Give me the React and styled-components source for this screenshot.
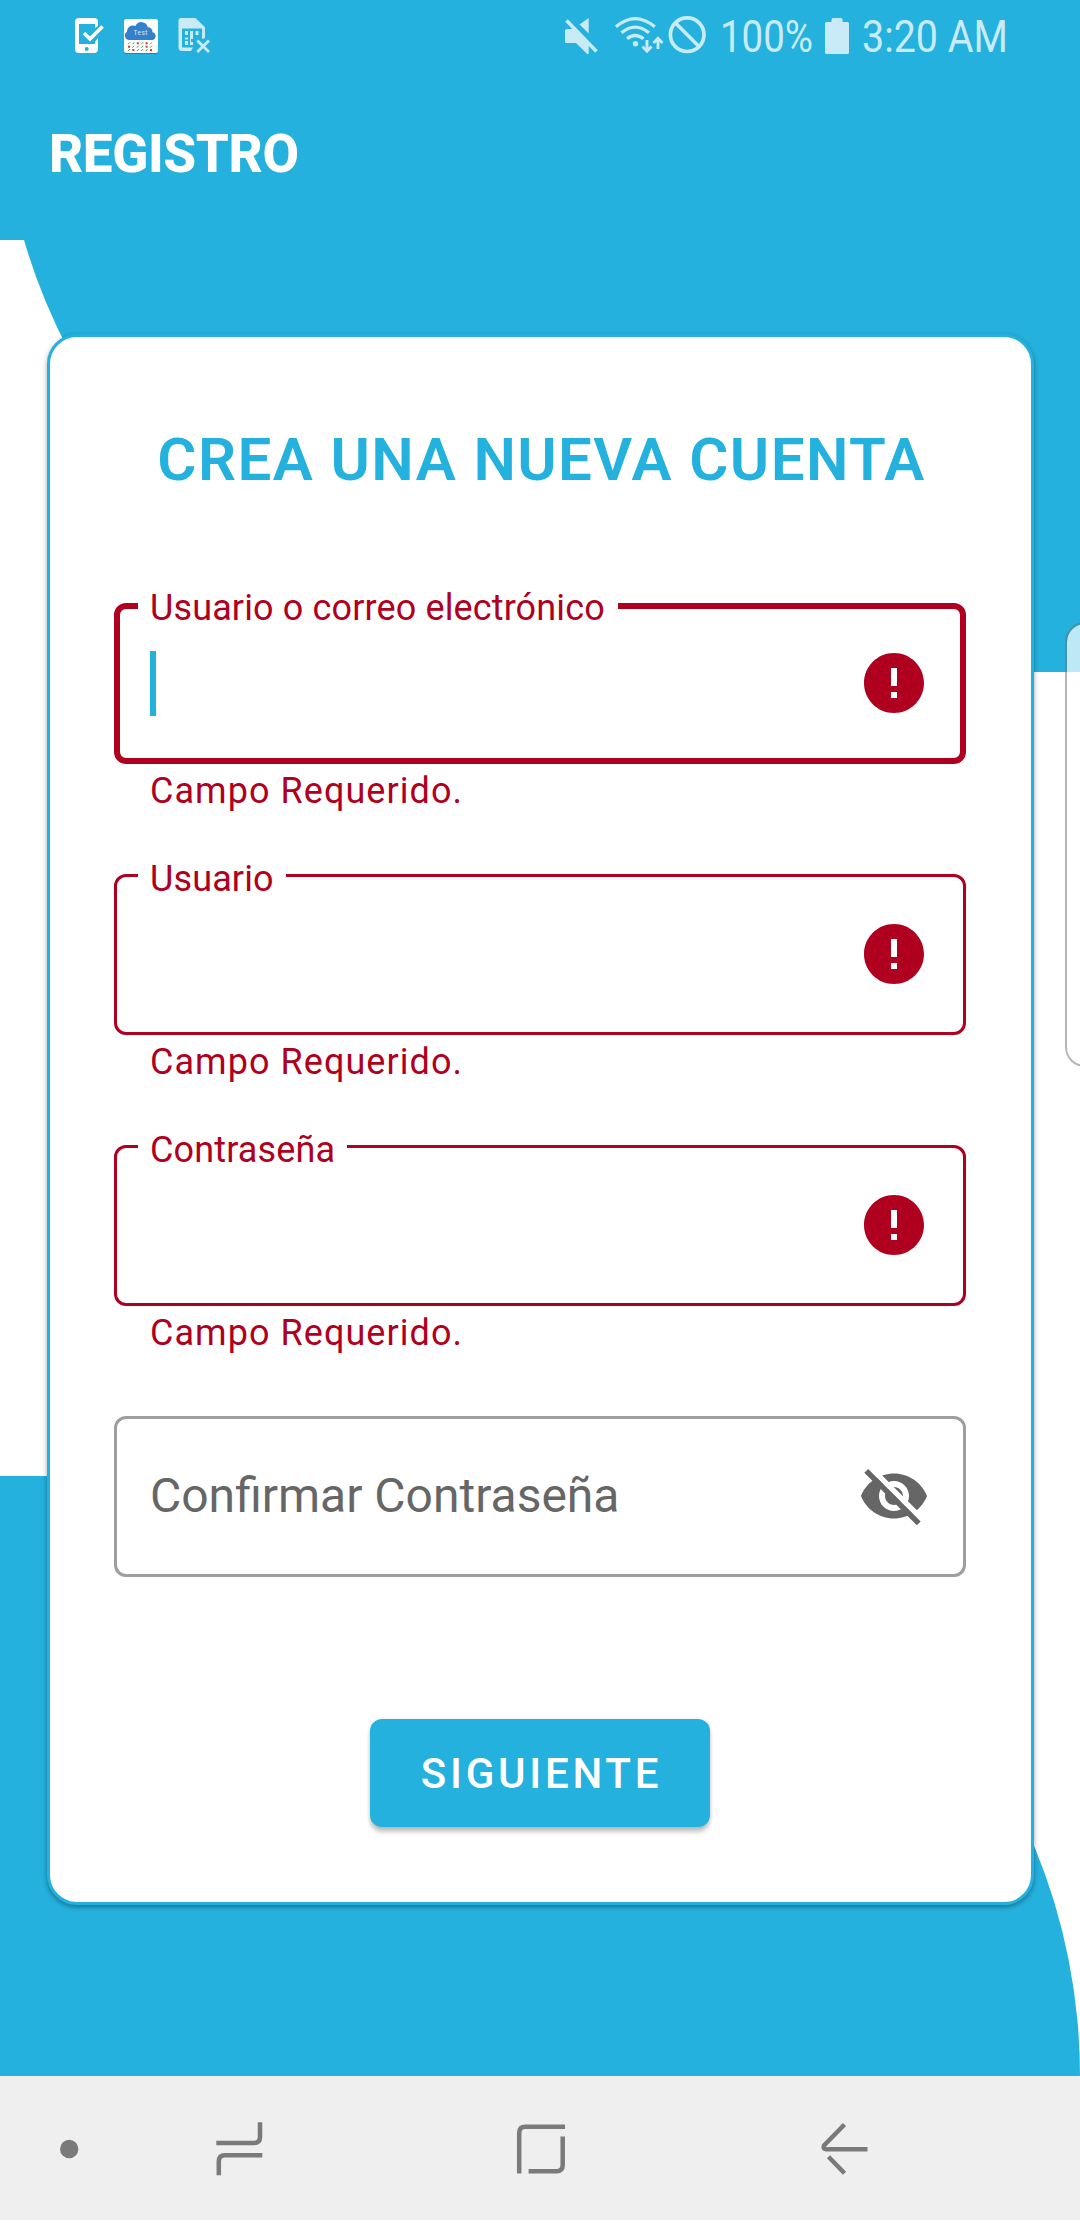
import React from "react";
import styled, { createGlobalStyle } from "styled-components";

const BLUE = "#24b1dd";
const ERROR = "#b00020";

const Global = createGlobalStyle`
  * { box-sizing: border-box; }
  body { margin: 0; background: #fff; font-family: Roboto, "Liberation Sans", sans-serif; }
`;

const Screen = styled.div`
  width: 1080px;
  height: 2220px;
  display: grid;
  grid-template-rows: 72px 168px 1836px 144px;
  position: relative;
  overflow: hidden;
`;

const StatusBar = styled.header`
  background: ${BLUE};
  color: #c8ebf7;
  display: flex;
  justify-content: space-between;
  padding: 0 73px 0 72px;
`;

const StatusGroup = styled.div`
  display: flex;
  height: 72px;
`;

const StatusIcon = styled.svg`
  display: block;
  flex: none;
  width: ${(p) => p.$w}px;
  height: 72px;
`;

const StatusText = styled.div`
  width: ${(p) => p.$w}px;
  font-size: 45px;
  line-height: 74px;
  white-space: nowrap;
  transform-origin: 0 0;
  transform: scaleX(${(p) => p.$scale});
`;

const AppBar = styled.div`
  background: ${BLUE};
  display: flex;
  align-items: center;
  padding: 0 0 5px 49px;
`;

const AppTitle = styled.h1`
  margin: 0;
  color: #fff;
  font-size: 53px;
  line-height: 60px;
  font-weight: 800;
  letter-spacing: -0.4px;
`;

const Body = styled.main`
  position: relative;
  overflow: hidden;
  background: #fff;
  padding: 94px 46px 0 47px;
  &::before,
  &::after {
    content: "";
    position: absolute;
    left: 0;
    width: 1080px;
    height: 600px;
    background: ${BLUE};
  }
  &::before {
    top: -168px;
    border-bottom-left-radius: 600px;
  }
  &::after {
    bottom: 0;
    border-top-right-radius: 600px;
  }
`;

const Card = styled.section`
  position: relative;
  z-index: 1;
  height: 1571px;
  background: #fff;
  border: 3px solid ${BLUE};
  border-radius: 30px;
  box-shadow: 0 2px 5px rgba(0, 0, 0, 0.36);
  padding: 82px 65px 0 64px;
  display: flex;
  flex-direction: column;
  align-items: center;
`;

const Heading = styled.h2`
  margin: 0 0 102px;
  padding-left: 3px;
  height: 82px;
  line-height: 82px;
  color: ${BLUE};
  font-size: 60px;
  font-weight: 600;
  letter-spacing: 1.4px;
  white-space: nowrap;
`;

const Field = styled.div`
  width: 852px;
  height: 271px;
`;

const Box = styled.div`
  position: relative;
  height: 161px;
  border: ${(p) => (p.$focused ? 6 : 3)}px solid ${(p) => (p.$error ? ERROR : "#9e9e9e")};
  border-radius: 12px;
  padding: 0 ${(p) => (p.$focused ? 30 : 33)}px;
  display: flex;
  align-items: center;
  justify-content: space-between;
`;

const Label = styled.span`
  position: absolute;
  top: ${(p) => (p.$focused ? -22 : -19)}px;
  left: ${(p) => (p.$focused ? 18 : 21)}px;
  width: ${(p) => p.$w}px;
  padding-left: 12px;
  background: #fff;
  color: ${ERROR};
  font-size: 36px;
  line-height: 42px;
  letter-spacing: 0.13px;
  white-space: nowrap;
`;

const Caret = styled.span`
  width: 6px;
  height: 65px;
  background: ${BLUE};
`;

const Placeholder = styled.span`
  margin-bottom: 2px;
  color: #666;
  font-size: 48px;
  line-height: 60px;
`;

const FieldIcon = styled.svg`
  display: block;
  width: 72px;
  height: 72px;
  margin: 0 0 1px auto;
  color: ${(p) => (p.$error ? ERROR : "#666")};
`;

const Helper = styled.div`
  padding: 6px 0 0 36px;
  color: ${ERROR};
  font-size: 36px;
  line-height: 42px;
  letter-spacing: 1.05px;
`;

const Next = styled.button`
  width: 340px;
  height: 108px;
  margin-top: 32px;
  padding: 2px 0 0 3px;
  border: 0;
  border-radius: 12px;
  background: ${BLUE};
  color: #fff;
  font: 500 42px/1 Roboto, "Liberation Sans", sans-serif;
  letter-spacing: 3.75px;
  box-shadow: 0 6px 5px -1px rgba(0, 0, 0, 0.22), 0 1px 5px rgba(0, 0, 0, 0.14);
`;

const EdgePanel = styled.aside`
  position: absolute;
  top: 622px;
  left: 1065px;
  width: 60px;
  height: 445px;
  z-index: 2;
  border: 2px solid rgba(110, 110, 110, 0.5);
  border-radius: 20px;
  background: rgba(255, 255, 255, 0.7);
  background-clip: padding-box;
`;

const NavBar = styled.nav`
  background: #efefef;
  display: grid;
  grid-template-columns: 138px 203px 398px 341px;
`;

const NavIcon = styled.svg`
  display: block;
  width: 100%;
  height: 144px;
  fill: none;
  stroke: #7a7a7a;
  stroke-width: 4.5;
`;

function ErrorIcon() {
  return (
    <FieldIcon viewBox="0 0 24 24" $error>
      <path
        fill="currentColor"
        d="M12 2C6.48 2 2 6.48 2 12s4.48 10 10 10 10-4.48 10-10S17.52 2 12 2zm1 15h-2v-2h2v2zm0-4h-2V7h2v6z"
      />
    </FieldIcon>
  );
}

function EyeOffIcon() {
  return (
    <FieldIcon viewBox="0 0 24 24">
      <path
        fill="currentColor"
        d="M12 4.5C7 4.5 2.73 7.61 1 12c1.73 4.39 6 7.5 11 7.5s9.27-3.11 11-7.5c-1.73-4.39-6-7.5-11-7.5zM12 17c-2.76 0-5-2.24-5-5s2.24-5 5-5 5 2.24 5 5-2.24 5-5 5zm0-8c-1.66 0-3 1.34-3 3s1.34 3 3 3 3-1.34 3-3-1.34-3-3-3z"
      />
      <path d="M4 2.4L22.6 21" stroke="#fff" strokeWidth="1.8" />
      <path d="M2.75 3.65L20.25 21.15" stroke="currentColor" strokeWidth="1.8" />
    </FieldIcon>
  );
}

function FormField({ label, labelWidth, placeholder, error, focused }) {
  return (
    <Field>
      <Box $error={!!error} $focused={focused}>
        {label && (
          <Label $w={labelWidth} $focused={focused}>
            {label}
          </Label>
        )}
        {focused && <Caret />}
        {placeholder && <Placeholder>{placeholder}</Placeholder>}
        {error ? <ErrorIcon /> : <EyeOffIcon />}
      </Box>
      {error && <Helper>{error}</Helper>}
    </Field>
  );
}

const CLOUD_MARKS = [
  "ggrgrg",
  "rgggrg",
  "grgggr",
];

function StatusLeft() {
  return (
    <StatusGroup>
      <StatusIcon $w={50} viewBox="72 0 50 72">
        <path
          fill="#fff"
          d="M79 18h15q4 0 4 4v4l-3 2v-4H79v20h16v-2l3-4v11q0 4-4 4H79q-4 0-4-4V22q0-4 4-4z"
        />
        <circle cx="86.7" cy="49" r="2" fill={BLUE} />
        <path d="M84 33l6 6 12.500-12.500" fill="none" stroke="#fff" strokeWidth="3.600" />
      </StatusIcon>
      <StatusIcon $w={54} viewBox="122 0 54 72">
        <rect x="124" y="20" width="34" height="34" rx="2.500" fill="#1f87aa" />
        <rect x="124" y="19" width="34" height="34" rx="2.500" fill="#fff" />
        <path
          fill="#3380cc"
          d="M129.500 40a4.500 4.500 0 0 1-2.500-8.300a6 6 0 0 1 8.500-5.700a6.500 6.500 0 0 1 12.300 1.300a4.500 4.500 0 0 1 4.700 4.900a4 4 0 0 1 0 7.800z"
        />
        <text x="133.500" y="35" fontSize="6.500" textLength="14" fill="#d8eaff">
          Test
        </text>
        {CLOUD_MARKS.map((row, y) =>
          row.split("").map((mark, x) => {
            const cx = 129 + x * 4.4;
            const cy = 43.3 + y * 3.4;
            return mark === "r" ? (
              <rect key={`${x}-${y}`} x={cx - 1} y={cy - 1} width="2" height="2" fill="#c93a3a" />
            ) : (
              <path key={`${x}-${y}`} d={`M${cx - 1} ${cy + 1}l2-2`} stroke="#3c9a45" strokeWidth="1" />
            );
          })
        )}
      </StatusIcon>
      <StatusIcon $w={40} viewBox="176 0 40 72">
        <path
          fill="#c8ebf7"
          fillRule="evenodd"
          d="M181 18h14.500l9.500 9.300V38l-3 1v-10.500h-20V47.500h11l-2 3.500H182q-3.500 0-3.500-3.500V21q0-3 2.500-3z"
        />
        <path
          fill="#c8ebf7"
          d="M185 31h3v4h-3zm5 0h3v8h-2v3h2v3h-3zm5.500 0h3v4h-3zM185 37.500h3v2h-3zm0 3.500h3v4h-3z"
        />
        <path d="M197.300 40.500l11.700 11.500M209 40.500L197.300 52" stroke="#c8ebf7" strokeWidth="2.800" />
      </StatusIcon>
    </StatusGroup>
  );
}

function StatusRight() {
  return (
    <StatusGroup>
      <StatusIcon $w={157} viewBox="563 0 157 72" fill="none" stroke="#c8ebf7">
        <path
          stroke="none"
          fill="#c8ebf7"
          d="M588.700 18v15.500l-9.200-9zM567 29h6l15.700 15.500V54h-1.500L576 43h-9.500q-1.500 0-1.500-1.500v-11q0-1.500 2-1.500z"
        />
        <path d="M566.500 20.500L596.500 51.500" strokeWidth="3.600" />
        <path
          strokeWidth="3.300"
          d="M616 26.800Q635 10.500 654.800 26.800M621.500 32.800Q635 21.500 649 32.800M627 38.800Q635 32.200 643.500 38.800"
        />
        <circle cx="635.500" cy="43.700" r="2.700" stroke="none" fill="#c8ebf7" />
        <path strokeWidth="2.900" d="M647 40v11M642.500 46.500l4.500 4.700 4.500-4.700M658 49V38.500M653.500 43l4.500-4.700 4.500 4.700" />
        <circle cx="687.200" cy="34.700" r="16.800" strokeWidth="3.700" />
        <path strokeWidth="3.600" d="M675.500 23L699 46.500" />
      </StatusIcon>
      <StatusText $w={103} $scale={0.855}>100%</StatusText>
      <StatusIcon $w={39} viewBox="823 0 39 72">
        <path
          fill="#c8ebf7"
          d="M833 18h8q1.500 0 1.500 1.500V22h5q1.500 0 1.500 1.500v29q0 1.500-1.500 1.500h-21q-1.500 0-1.500-1.500v-29q0-1.500 1.500-1.500h5v-2.500q0-1.500 1.500-1.500z"
        />
      </StatusIcon>
      <StatusText $w={145} $scale={0.875}>3:20 AM</StatusText>
    </StatusGroup>
  );
}

export default function App() {
  return (
    <Screen>
      <Global />
      <StatusBar>
        <StatusLeft />
        <StatusRight />
      </StatusBar>
      <AppBar>
        <AppTitle>REGISTRO</AppTitle>
      </AppBar>
      <Body>
        <Card>
          <Heading>CREA UNA NUEVA CUENTA</Heading>
          <FormField label="Usuario o correo electrónico" labelWidth={480} error="Campo Requerido." focused />
          <FormField label="Usuario" labelWidth={148} error="Campo Requerido." />
          <FormField label="Contraseña" labelWidth={209} error="Campo Requerido." />
          <FormField placeholder="Confirmar Contraseña" />
          <Next>SIGUIENTE</Next>
        </Card>
      </Body>
      <NavBar>
        <NavIcon viewBox="0 2076 138 144">
          <circle cx="69.200" cy="2149" r="9.200" fill="#7a7a7a" stroke="none" />
        </NavIcon>
        <NavIcon viewBox="138 2076 203 144">
          <path d="M216.300 2143H254q6 0 6-6V2122.300M262.300 2155.200H225q-6.200 0-6.200 6.200V2175.300" />
        </NavIcon>
        <NavIcon viewBox="341 2076 398 144">
          <path d="M519.200 2173.500V2133q0-6.200 6.200-6.200H565M562.700 2136.500V2165q0 6.200-6.200 6.200H528.600" />
        </NavIcon>
        <NavIcon viewBox="739 2076 341 144">
          <path d="M844.500 2124.500L824 2145.500Q822.500 2149.200 826 2149.200H867.500M828.500 2156.800L844.500 2173.200" />
        </NavIcon>
      </NavBar>
      <EdgePanel />
    </Screen>
  );
}
